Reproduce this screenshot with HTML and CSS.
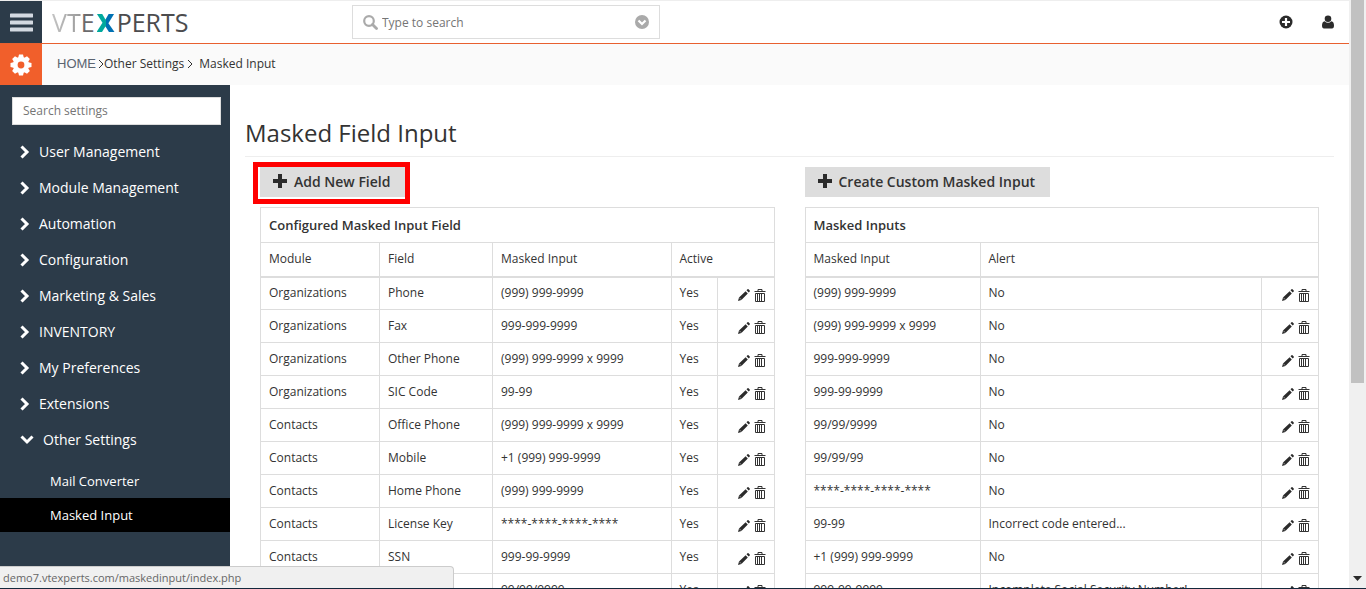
FILE: index.html
```html
<!DOCTYPE html>
<html lang="en">
<head>
    <meta charset="UTF-8">
    <meta name="viewport" content="width=device-width, initial-scale=1">
    <title>Masked Field Input</title>
    <link rel="stylesheet" href="styles.css">
</head>
<body>
    <svg class="sprite" aria-hidden="true">
        <symbol id="pencil" viewBox="0 0 12 12">
            <path d="M0 12l1-3.400L7.600 2.200 9.800 4.400 3.400 11z M8.500 1.300l1-1q.5-.5 1 0l1.200 1.200q.5.5 0 1l-1 1z"/>
            <path d="M1.300 8.700l2 2" stroke="#fff" stroke-width=".5"/>
        </symbol>
        <symbol id="trash" viewBox="0 0 12 13">
            <path d="M.5 2.500h11M4 2.500v-2h4v2M1.500 4.500h9v8h-9zM3.500 5v7M5.500 5v7M7.500 5v7" fill="none" stroke="currentColor"/>
        </symbol>
        <symbol id="plus" viewBox="0 0 14 14">
            <path d="M5 0h4v5h5v4H9v5H5V9H0V5h5z"/>
        </symbol>
        <symbol id="chevron" viewBox="0 0 10 14">
            <path d="M1.500 1.500L7 7l-5.500 5.500" fill="none" stroke="currentColor" stroke-width="3"/>
        </symbol>
        <symbol id="chevron-down" viewBox="0 0 14 10">
            <path d="M1.500 1.500L7 7l5.500-5.500" fill="none" stroke="currentColor" stroke-width="3"/>
        </symbol>
    </svg>

    <div class="window">
        <div class="page">
            <header class="topbar">
                <button class="menu-toggle" type="button" aria-label="Menu">
                    <svg width="23" height="19" viewBox="0 0 23 19"><path d="M1 2.500h21M1 9.500h21M1 16.500h21" stroke="#d3d9e1" stroke-width="4" stroke-linecap="round"/></svg>
                </button>
                <a class="logo" href="#"><span class="logo-vt">VT</span><span class="logo-e">E</span><span class="logo-x">X</span><span>PERTS</span></a>
                <div class="global-search">
                    <svg width="15" height="15" viewBox="0 0 15 15"><circle cx="6" cy="6" r="4.800" fill="none" stroke="#aaa" stroke-width="2.200"/><path d="M9.500 9.500l4 4" stroke="#aaa" stroke-width="2.800" stroke-linecap="round"/></svg>
                    <input type="text" placeholder="Type to search" aria-label="Type to search">
                    <button type="button" aria-label="Advanced search">
                        <svg width="14" height="14" viewBox="0 0 14 14"><circle cx="7" cy="7" r="7" fill="#aaa"/><path d="M3.500 5.500L7 9l3.500-3.500" fill="none" stroke="#fff" stroke-width="2.200"/></svg>
                    </button>
                </div>
                <div class="top-actions">
                    <button type="button" aria-label="Quick create">
                        <svg width="14" height="14" viewBox="0 0 14 14"><circle cx="7" cy="7" r="6.500"/><path d="M7 3v8M3 7h8" stroke="#fff" stroke-width="2.200"/></svg>
                    </button>
                    <button type="button" aria-label="User">
                        <svg width="14" height="14" viewBox="0 0 14 14"><circle cx="7" cy="3.800" r="3.300"/><path d="M3.600 6.200Q7 9.300 10.400 6.200 13 6.700 13 10.600 13 13.500 11 13.500H3Q1 13.500 1 10.600 1 6.700 3.600 6.200z"/></svg>
                    </button>
                </div>
            </header>

            <nav class="breadcrumb">
                <a class="settings-tile" href="#" aria-label="Settings">
                    <svg width="22" height="22" viewBox="-11 -11 22 22">
                        <g fill="#fff">
                            <circle r="8"/>
                            <path id="tooth" d="M-2-10.500h4l1 4h-6zM-2 10.500h4l1-4h-6z"/>
                            <use href="#tooth" transform="rotate(45)"/>
                            <use href="#tooth" transform="rotate(90)"/>
                            <use href="#tooth" transform="rotate(135)"/>
                        </g>
                        <circle r="3.400" fill="#f15f2b"/>
                    </svg>
                </a>
                <a class="home" href="#">HOME</a>
                <svg class="crumb-arrow" width="6" height="10" viewBox="0 0 6 10"><path d="M1 1l4 4-4 4"/></svg>
                <a href="#">Other Settings</a>
                <svg class="crumb-arrow spaced" width="6" height="10" viewBox="0 0 6 10"><path d="M1 1l4 4-4 4"/></svg>
                <a href="#">Masked Input</a>
            </nav>

            <div class="body">
                <aside class="sidebar">
                    <input class="settings-search" type="text" placeholder="Search settings" aria-label="Search settings">
                    <ul class="menu">
                        <li><a href="#"><svg width="10" height="14"><use href="#chevron"/></svg>User Management</a></li>
                        <li><a href="#"><svg width="10" height="14"><use href="#chevron"/></svg>Module Management</a></li>
                        <li><a href="#"><svg width="10" height="14"><use href="#chevron"/></svg>Automation</a></li>
                        <li><a href="#"><svg width="10" height="14"><use href="#chevron"/></svg>Configuration</a></li>
                        <li><a href="#"><svg width="10" height="14"><use href="#chevron"/></svg>Marketing &amp; Sales</a></li>
                        <li><a href="#"><svg width="10" height="14"><use href="#chevron"/></svg>INVENTORY</a></li>
                        <li><a href="#"><svg width="10" height="14"><use href="#chevron"/></svg>My Preferences</a></li>
                        <li><a href="#"><svg width="10" height="14"><use href="#chevron"/></svg>Extensions</a></li>
                        <li>
                            <a href="#"><svg width="14" height="10"><use href="#chevron-down"/></svg>Other Settings</a>
                            <ul class="submenu">
                                <li><a href="#">Mail Converter</a></li>
                                <li><a class="active" href="#">Masked Input</a></li>
                            </ul>
                        </li>
                    </ul>
                </aside>

                <main class="content">
                    <h1>Masked Field Input</h1>
                    <div class="columns">
                        <section>
                            <div class="highlighted">
                                <button class="btn" type="button"><svg width="14" height="14"><use href="#plus"/></svg>Add New Field</button>
                            </div>
                            <table>
                                <colgroup>
                                    <col class="col-module"><col class="col-field"><col><col class="col-active"><col class="col-actions">
                                </colgroup>
                                <thead>
                                    <tr class="title"><th colspan="5">Configured Masked Input Field</th></tr>
                                    <tr class="heads"><th>Module</th><th>Field</th><th>Masked Input</th><th colspan="2">Active</th></tr>
                                </thead>
                                <tbody>
                                    <tr><td>Organizations</td><td>Phone</td><td>(999) 999-9999</td><td>Yes</td><td class="actions"><button type="button" aria-label="Edit"><svg width="12" height="12"><use href="#pencil"/></svg></button><button type="button" aria-label="Delete"><svg width="12" height="13"><use href="#trash"/></svg></button></td></tr>
                                    <tr><td>Organizations</td><td>Fax</td><td>999-999-9999</td><td>Yes</td><td class="actions"><button type="button" aria-label="Edit"><svg width="12" height="12"><use href="#pencil"/></svg></button><button type="button" aria-label="Delete"><svg width="12" height="13"><use href="#trash"/></svg></button></td></tr>
                                    <tr><td>Organizations</td><td>Other Phone</td><td>(999) 999-9999 x 9999</td><td>Yes</td><td class="actions"><button type="button" aria-label="Edit"><svg width="12" height="12"><use href="#pencil"/></svg></button><button type="button" aria-label="Delete"><svg width="12" height="13"><use href="#trash"/></svg></button></td></tr>
                                    <tr><td>Organizations</td><td>SIC Code</td><td>99-99</td><td>Yes</td><td class="actions"><button type="button" aria-label="Edit"><svg width="12" height="12"><use href="#pencil"/></svg></button><button type="button" aria-label="Delete"><svg width="12" height="13"><use href="#trash"/></svg></button></td></tr>
                                    <tr><td>Contacts</td><td>Office Phone</td><td>(999) 999-9999 x 9999</td><td>Yes</td><td class="actions"><button type="button" aria-label="Edit"><svg width="12" height="12"><use href="#pencil"/></svg></button><button type="button" aria-label="Delete"><svg width="12" height="13"><use href="#trash"/></svg></button></td></tr>
                                    <tr><td>Contacts</td><td>Mobile</td><td>+1 (999) 999-9999</td><td>Yes</td><td class="actions"><button type="button" aria-label="Edit"><svg width="12" height="12"><use href="#pencil"/></svg></button><button type="button" aria-label="Delete"><svg width="12" height="13"><use href="#trash"/></svg></button></td></tr>
                                    <tr><td>Contacts</td><td>Home Phone</td><td>(999) 999-9999</td><td>Yes</td><td class="actions"><button type="button" aria-label="Edit"><svg width="12" height="12"><use href="#pencil"/></svg></button><button type="button" aria-label="Delete"><svg width="12" height="13"><use href="#trash"/></svg></button></td></tr>
                                    <tr><td>Contacts</td><td>License Key</td><td>****-****-****-****</td><td>Yes</td><td class="actions"><button type="button" aria-label="Edit"><svg width="12" height="12"><use href="#pencil"/></svg></button><button type="button" aria-label="Delete"><svg width="12" height="13"><use href="#trash"/></svg></button></td></tr>
                                    <tr><td>Contacts</td><td>SSN</td><td>999-99-9999</td><td>Yes</td><td class="actions"><button type="button" aria-label="Edit"><svg width="12" height="12"><use href="#pencil"/></svg></button><button type="button" aria-label="Delete"><svg width="12" height="13"><use href="#trash"/></svg></button></td></tr>
                                    <tr><td></td><td></td><td>99/99/9999</td><td>Yes</td><td class="actions"><button type="button" aria-label="Edit"><svg width="12" height="12"><use href="#pencil"/></svg></button><button type="button" aria-label="Delete"><svg width="12" height="13"><use href="#trash"/></svg></button></td></tr>
                                </tbody>
                            </table>
                        </section>

                        <section class="masks">
                            <button class="btn" type="button"><svg width="14" height="14"><use href="#plus"/></svg>Create Custom Masked Input</button>
                            <table>
                                <colgroup>
                                    <col class="col-mask"><col><col class="col-actions">
                                </colgroup>
                                <thead>
                                    <tr class="title"><th colspan="3">Masked Inputs</th></tr>
                                    <tr class="heads"><th>Masked Input</th><th colspan="2">Alert</th></tr>
                                </thead>
                                <tbody>
                                    <tr><td>(999) 999-9999</td><td>No</td><td class="actions"><button type="button" aria-label="Edit"><svg width="12" height="12"><use href="#pencil"/></svg></button><button type="button" aria-label="Delete"><svg width="12" height="13"><use href="#trash"/></svg></button></td></tr>
                                    <tr><td>(999) 999-9999 x 9999</td><td>No</td><td class="actions"><button type="button" aria-label="Edit"><svg width="12" height="12"><use href="#pencil"/></svg></button><button type="button" aria-label="Delete"><svg width="12" height="13"><use href="#trash"/></svg></button></td></tr>
                                    <tr><td>999-999-9999</td><td>No</td><td class="actions"><button type="button" aria-label="Edit"><svg width="12" height="12"><use href="#pencil"/></svg></button><button type="button" aria-label="Delete"><svg width="12" height="13"><use href="#trash"/></svg></button></td></tr>
                                    <tr><td>999-99-9999</td><td>No</td><td class="actions"><button type="button" aria-label="Edit"><svg width="12" height="12"><use href="#pencil"/></svg></button><button type="button" aria-label="Delete"><svg width="12" height="13"><use href="#trash"/></svg></button></td></tr>
                                    <tr><td>99/99/9999</td><td>No</td><td class="actions"><button type="button" aria-label="Edit"><svg width="12" height="12"><use href="#pencil"/></svg></button><button type="button" aria-label="Delete"><svg width="12" height="13"><use href="#trash"/></svg></button></td></tr>
                                    <tr><td>99/99/99</td><td>No</td><td class="actions"><button type="button" aria-label="Edit"><svg width="12" height="12"><use href="#pencil"/></svg></button><button type="button" aria-label="Delete"><svg width="12" height="13"><use href="#trash"/></svg></button></td></tr>
                                    <tr><td>****-****-****-****</td><td>No</td><td class="actions"><button type="button" aria-label="Edit"><svg width="12" height="12"><use href="#pencil"/></svg></button><button type="button" aria-label="Delete"><svg width="12" height="13"><use href="#trash"/></svg></button></td></tr>
                                    <tr><td>99-99</td><td>Incorrect code entered...</td><td class="actions"><button type="button" aria-label="Edit"><svg width="12" height="12"><use href="#pencil"/></svg></button><button type="button" aria-label="Delete"><svg width="12" height="13"><use href="#trash"/></svg></button></td></tr>
                                    <tr><td>+1 (999) 999-9999</td><td>No</td><td class="actions"><button type="button" aria-label="Edit"><svg width="12" height="12"><use href="#pencil"/></svg></button><button type="button" aria-label="Delete"><svg width="12" height="13"><use href="#trash"/></svg></button></td></tr>
                                    <tr><td>999-99-9999</td><td>Incomplete Social Security Number!</td><td class="actions"><button type="button" aria-label="Edit"><svg width="12" height="12"><use href="#pencil"/></svg></button><button type="button" aria-label="Delete"><svg width="12" height="13"><use href="#trash"/></svg></button></td></tr>
                                </tbody>
                            </table>
                        </section>
                    </div>
                </main>
            </div>
        </div>

        <div class="scrollbar">
            <div class="thumb"></div>
            <svg width="9" height="5" viewBox="0 0 9 5"><path d="M0 0h9L4.500 5z"/></svg>
        </div>
        <div class="status">demo7.vtexperts.com/maskedinput/index.php</div>
    </div>
</body>
</html>
```
FILE: styles.css
```css
* {
    box-sizing: border-box;
}

body {
    margin: 0;
    background: #fff;
    color: #333;
    font-family: 'Open Sans', sans-serif;
    font-size: 12px;
    line-height: 16px;
}

a {
    color: inherit;
    text-decoration: none;
}

button {
    padding: 0;
    border: none;
    background: transparent;
    color: inherit;
    font-family: inherit;
    cursor: pointer;
}

input {
    font-family: inherit;
    border-radius: 0;
}

input::placeholder {
    color: #757575;
}

svg {
    display: block;
    flex: none;
    fill: #2b2b2b;
}

ul {
    margin: 0;
    padding: 0;
    list-style: none;
}

.sprite {
    position: absolute;
    width: 0;
    height: 0;
}

.window {
    position: relative;
    display: flex;
    height: 100vh;
    overflow: hidden;
    border-bottom: 1px solid #13283c;
}

.page {
    flex: 1;
    display: flex;
    flex-direction: column;
    min-width: 0;
    border-top: 1px solid #eee;
}

/* top bar */
.topbar {
    display: flex;
    flex: none;
    align-items: center;
    height: 43px;
    border-bottom: 1px solid #e8602f;
}

.menu-toggle {
    display: flex;
    align-items: center;
    justify-content: center;
    width: 42px;
    height: 42px;
    background: #2c3b49;
}

.logo {
    display: flex;
    align-items: center;
    margin-left: 10px;
    width: 300px;
    color: #4c4c4e;
    font-size: 25px;
    line-height: 42px;
}

.logo-vt {
    background: linear-gradient(90deg, #c4c4c4, #999);
    background-clip: text;
    color: transparent;
}

.logo-e {
    color: #6b6b6d;
}

.logo-x {
    margin: 0 2px;
    background: linear-gradient(90deg, #00a99d 50%, #0071b3 50%);
    background-clip: text;
    color: transparent;
    font-weight: 800;
}

.global-search {
    display: flex;
    align-items: center;
    width: 308px;
    height: 34px;
    padding: 0 10px;
    border: 1px solid #ddd;
}

.global-search input {
    flex: 1;
    min-width: 0;
    padding: 0 4px;
    border: none;
    font-size: 12px;
}

.top-actions {
    display: flex;
    gap: 28px;
    margin-left: auto;
    padding-right: 14px;
}

/* breadcrumb */
.breadcrumb {
    display: flex;
    flex: none;
    align-items: center;
    height: 41px;
    padding-bottom: 2px;
    background: #fafafa;
}

.settings-tile {
    display: flex;
    align-items: center;
    align-self: flex-start;
    justify-content: center;
    width: 42px;
    height: 41px;
    margin-right: 15px;
    background: #f15f2b;
}

.home {
    margin-right: 2px;
    color: #5b6470;
    font-family: 'Liberation Sans', sans-serif;
    font-size: 13px;
}

.crumb-arrow path {
    fill: none;
    stroke: #333;
}

.crumb-arrow.spaced {
    margin: 0 6px 0 3px;
}

.body {
    display: flex;
    flex: 1;
    min-height: 0;
}

/* sidebar */
.sidebar {
    flex: none;
    width: 230px;
    padding-top: 12px;
    background: #2c3b49;
    color: #fff;
}

.settings-search {
    display: block;
    width: 209px;
    height: 28px;
    margin: 0 0 9px 12px;
    padding: 0 10px 2px;
    border: 1px solid #ddd;
    font-size: 12px;
}

.menu a {
    display: flex;
    align-items: center;
    gap: 9px;
    height: 36px;
    padding-left: 20px;
    font-size: 14px;
}

.menu .submenu {
    padding-top: 6px;
}

.menu .submenu a {
    height: 34px;
    padding-left: 50px;
    font-size: 13px;
}

.menu .submenu .active {
    background: #000;
}

/* content */
.content {
    flex: 1;
    min-width: 0;
    padding: 31px 15px 0;
}

h1 {
    margin: 0;
    padding-bottom: 6px;
    border-bottom: 1px solid #eee;
    font-size: 24px;
    font-weight: 400;
    line-height: 34px;
}

.columns {
    display: grid;
    grid-template-columns: 1fr 1fr;
}

.columns section {
    min-width: 0;
    padding: 10px 15px 0;
}

.btn {
    display: flex;
    align-items: center;
    gap: 7px;
    height: 30px;
    margin-bottom: 10px;
    padding: 0 15px 2px 13px;
    background: #ddd;
    color: #333;
    font-size: 14px;
    font-weight: 600;
}

.highlighted {
    position: relative;
    width: fit-content;
}

.highlighted::after {
    content: '';
    position: absolute;
    top: -5px;
    right: -5px;
    bottom: -7px;
    left: -7px;
    border: 5px solid #f00;
}

table {
    width: 100%;
    table-layout: fixed;
    border-collapse: collapse;
    border: 1px solid #ddd;
}

.col-module {
    width: 119px;
}

.col-field {
    width: 113px;
}

.col-active {
    width: 46px;
}

.col-mask {
    width: 175px;
}

.col-actions {
    width: 57px;
}

th,
td {
    height: 33px;
    padding: 0 8px;
    border: 1px solid #ddd;
    font-size: 12px;
    text-align: left;
    white-space: nowrap;
}

.title th {
    height: 35px;
    font-size: 13px;
    font-weight: 600;
}

.heads th {
    height: 34px;
    border-bottom-width: 2px;
    font-weight: 500;
}

.actions button {
    display: inline-block;
    margin-left: 4px;
    vertical-align: middle;
}

.actions {
    padding-top: 2px;
    text-align: right;
}

/* browser chrome */
.scrollbar {
    display: flex;
    flex-direction: column;
    justify-content: space-between;
    align-items: center;
    flex: none;
    width: 17px;
    padding-bottom: 7px;
    background: #f0f0f0;
}

.thumb {
    width: 13px;
    height: 66%;
    background: #c1c1c1;
}

.status {
    position: absolute;
    bottom: 0;
    left: 0;
    width: 454px;
    height: 22px;
    padding: 3px;
    border: 1px solid #ccc;
    border-width: 1px 1px 0 0;
    border-top-right-radius: 4px;
    background: #f0f0f0;
    color: #666;
    font-size: 11px;
}
```
